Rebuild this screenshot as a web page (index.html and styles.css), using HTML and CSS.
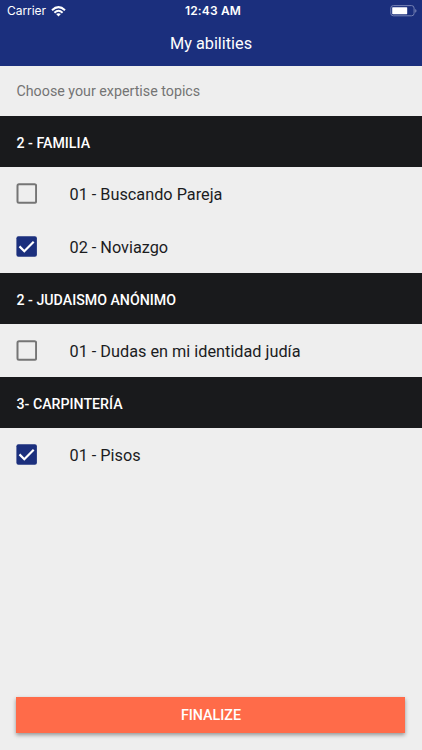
FILE: index.html
```html
<!DOCTYPE html>
<html lang="en">
<head>
<meta charset="utf-8">
<title>My abilities</title>
<link rel="stylesheet" href="styles.css">
</head>
<body>
<header class="header">
  <div class="status">
    <div class="carrier"><span>Carrier</span>
      <svg class="wifi" width="15" height="11" viewBox="0 0 15 11" fill="none" stroke="#fff" stroke-width="2"><path d="M1 4.2Q7.500-1.900 14 4.200M3.400 6.700Q7.500 2.900 11.600 6.700"/><path d="M5.100 8.100Q7.500 6.200 9.900 8.100L7.500 10.600Z" fill="#fff" stroke="none"/></svg>
    </div>
    <span class="time">12:43 AM</span>
    <svg class="battery" width="27" height="12" viewBox="0 0 27 12"><rect x=".8" y=".6" width="23.300" height="10.200" rx="2.500" fill="none" stroke="#7682b4"/><rect x="2.200" y="2.200" width="15" height="7" rx=".6" fill="#fff"/><path d="M25.200 4Q26.500 4.500 26.500 5.800T25.200 7.800Z" fill="#7682b4"/></svg>
  </div>
  <h1 class="title">My abilities</h1>
</header>
<main class="content">
  <p class="intro">Choose your expertise topics</p>
  <h2 class="section">2 - FAMILIA</h2>
  <label class="row"><svg class="box" viewBox="0 0 21 21"><rect class="off" x="1.500" y="1.200" width="18.600" height="18.600" rx="1.500"/></svg><span>01 - Buscando Pareja</span></label>
  <label class="row"><svg class="box" viewBox="0 0 21 21"><rect class="on" x=".4" y=".2" width="20.500" height="20.500" rx="2"/><path class="tick" d="M3.500 10.400L8.300 15.200L17.700 5.800"/></svg><span>02 - Noviazgo</span></label>
  <h2 class="section">2 - JUDAISMO ANÓNIMO</h2>
  <label class="row"><svg class="box" viewBox="0 0 21 21"><rect class="off" x="1.500" y="1.200" width="18.600" height="18.600" rx="1.500"/></svg><span>01 - Dudas en mi identidad judía</span></label>
  <h2 class="section">3- CARPINTERÍA</h2>
  <label class="row"><svg class="box" viewBox="0 0 21 21"><rect class="on" x=".4" y=".2" width="20.500" height="20.500" rx="2"/><path class="tick" d="M3.500 10.400L8.300 15.200L17.700 5.800"/></svg><span>01 - Pisos</span></label>
</main>
<footer class="footer"><button class="finalize" type="button">FINALIZE</button></footer>
</body>
</html>
```
FILE: styles.css
```css
* { box-sizing: border-box; }
body {
  margin: 0;
  height: 750px;
  display: flex;
  flex-direction: column;
  background: #eee;
  color: #1b1c1e;
  font-family: Roboto, sans-serif;
  overflow: hidden;
}
.header { height: 65.5px; flex: none; background: #1b2f7d; color: #fff; }
.status {
  height: 22px;
  display: grid;
  grid-template-columns: 1fr auto 1fr;
  align-items: center;
  padding: 0 5px 0 7px;
  font: 12px/22px Inter, sans-serif;
}
.carrier { display: flex; align-items: center; gap: 5px; letter-spacing: -.05px; }
.time { font-weight: 600; padding-left: 2px; letter-spacing: .15px; }
.battery { justify-self: end; }
.title { margin: 0; font-size: 16.3px; font-weight: 400; line-height: 44px; text-align: center; }
.content { flex: 1; }
.intro { margin: 0; height: 50.5px; padding-left: 16.5px; font-size: 14.250px; line-height: 51px; color: #747474; }
.section {
  margin: 0;
  height: 51px;
  padding-left: 16.5px;
  background: #191a1c;
  color: #fff;
  font-size: 14.2px;
  font-weight: 500;
  line-height: 54px;
}
.row { display: flex; align-items: center; height: 52.900px; padding-left: 16px; gap: 32.500px; font-size: 16.270px; }
.row span { padding-top: 2px; }
.box { width: 21px; height: 21px; flex: none; }
.off { fill: none; stroke: #757575; stroke-width: 2; }
.on { fill: #1b2f7d; }
.tick { fill: none; stroke: #fff; stroke-width: 2.200; }
.footer { flex: none; padding: 0 17px 17px 16px; display: flex; }
.finalize {
  flex: 1;
  height: 36.500px;
  padding: 0 0 0 1px;
  border: 0;
  background: #ff6b49;
  color: #fff;
  font: 500 14.300px/37px Roboto, sans-serif;
  box-shadow: 0 2px 4px rgba(0, 0, 0, .38);
}
```
